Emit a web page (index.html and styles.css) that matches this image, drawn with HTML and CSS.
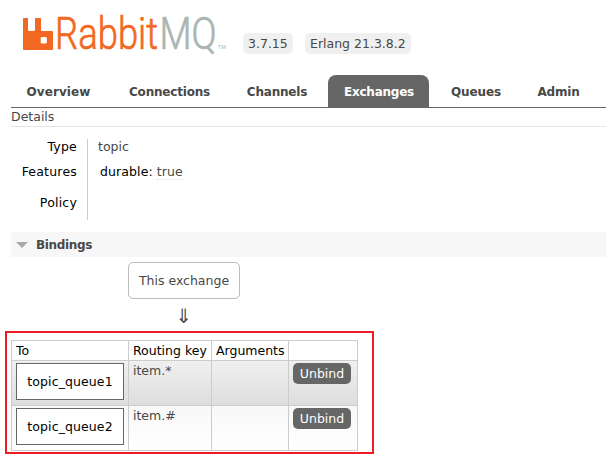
FILE: index.html
```html
<!DOCTYPE html>
<html lang="en">
<head>
<meta charset="utf-8">
<title>RabbitMQ Management</title>
<link rel="stylesheet" href="styles.css">
</head>
<body>
<header class="header">
  <svg class="logo" width="210" height="70" viewBox="20 0 210 70">
    <path class="mark" fill-rule="evenodd" d="M23.8 18H27.200Q28 18 28 18.800V29.500Q28 31 29.500 31H33.500Q35 31 35 29.500V18.800Q35 18 35.800 18H40.200Q41 18 41 18.800V30Q41 31 42 31H52Q53 31 53 32V49Q53 50 52 50H24Q23 50 23 49V18.800Q23 18 23.800 18ZM42 37Q40.700 37 40.700 38.300V42.200Q40.700 43.500 42 43.500H45.500Q46.800 43.500 46.800 42.200V38.300Q46.800 37 45.500 37Z"/>
    <text class="word orange" x="55" y="49" textLength="103" lengthAdjust="spacingAndGlyphs">Rabbit</text>
    <text class="word grey" x="159.500" y="49" textLength="57" lengthAdjust="spacingAndGlyphs">MQ</text>
    <text class="tm" x="218" y="49" textLength="8" lengthAdjust="spacingAndGlyphs">TM</text>
  </svg>
  <span class="version v1">3.7.15</span>
  <span class="version v2">Erlang 21.3.8.2</span>
</header>
<nav class="tabs">
  <a class="t1"><span>Overview</span></a>
  <a class="t2"><span>Connections</span></a>
  <a class="t3"><span>Channels</span></a>
  <a class="t4 selected"><span>Exchanges</span></a>
  <a class="t5"><span>Queues</span></a>
  <a class="t6"><span>Admin</span></a>
</nav>
<main>
  <h3 class="details">Details</h3>
  <dl class="facts">
    <dt>Type</dt><dd>topic</dd>
    <dt>Features</dt><dd class="feature">durable: <abbr>true</abbr></dd>
    <dt class="policy">Policy</dt><dd></dd>
  </dl>
  <h2 class="section"><svg width="12" height="6" viewBox="0 0 12 6"><path d="M0 0H12L6 6Z"/></svg>Bindings</h2>
  <div class="flow">
    <span class="exchange">This exchange</span>
    <span class="arrow">⇓</span>
  </div>
  <div class="highlight">
    <table>
      <colgroup><col class="c1"><col class="c2"><col class="c3"><col class="c4"></colgroup>
      <tr class="head"><th>To</th><th>Routing key</th><th>Arguments</th><th></th></tr>
      <tr class="odd"><td><span class="queue">topic_queue1</span></td><td>item.*</td><td></td><td><button>Unbind</button></td></tr>
      <tr class="even"><td><span class="queue">topic_queue2</span></td><td>item.#</td><td></td><td><button>Unbind</button></td></tr>
    </table>
  </div>
</main>
</body>
</html>
```
FILE: styles.css
```css
* { box-sizing: border-box; }
body {
  margin: 0;
  padding-left: 11px;
  height: 464px;
  overflow: hidden;
  background: #fff;
  color: #484848;
  font: 12.5px/16px "DejaVu Sans", Verdana, sans-serif;
}
.header { display: flex; height: 75px; padding-left: 9px; }
.logo { flex: none; }
.mark, .orange { fill: #f26822; }
.grey { fill: #a9b6b0; }
.word { font-family: Roboto, sans-serif; font-weight: 300; font-size: 45px; stroke-width: .7px; }
.orange { stroke: #f26822; }
.grey { stroke: #a9b6b0; }
.tm { fill: #a9b6b0; font: 6px "Liberation Sans", sans-serif; }
.version { height: 21px; margin-top: 33px; padding-left: 5px; border-radius: 5px; background: #f0f0f0; line-height: 22px; white-space: nowrap; }
.v1 { width: 50px; margin-left: 13px; }
.v2 { width: 106px; margin-left: 12px; }
.tabs { display: flex; height: 33px; border-bottom: 1px solid #666; font-weight: bold; font-size: 12px; }
.tabs a { height: 32px; line-height: 34px; text-align: center; border-radius: 8px 8px 0 0; white-space: nowrap; }
.t1 { width: 95px; letter-spacing: .1px; }
.t2 { width: 126px; padding-left: 1px; letter-spacing: -.2px; }
.t3 { width: 88px; padding-left: 2px; letter-spacing: -.2px; }
.t4 { width: 101px; margin-left: 8px; padding-left: 1px; letter-spacing: -.25px; }
.t5 { width: 94px; letter-spacing: -.1px; }
.t6 { width: 71px; letter-spacing: -.2px; }
.tabs .selected { background: #666; color: #fff; }
.details { margin: 0; height: 19px; border-bottom: 1px solid #e4e4e4; font-size: 12.5px; font-weight: normal; line-height: 18px; }
.facts { display: grid; grid-template-columns: 77px 1fr; grid-template-rows: 20px 29px 32px; margin: 12px 0; }
.facts dt { padding-right: 10px; border-right: 1px solid #ccc; color: #000; text-align: right; letter-spacing: .2px; }
.facts dd { margin: 0; padding-left: 10px; }
.facts dt, .facts dd { line-height: 16px; }
.facts dt:nth-of-type(2), .facts .feature { padding-top: 5px; }
.facts .policy { padding-top: 7px; }
.facts .feature { padding-left: 12px; color: #000; letter-spacing: .1px; }
.feature abbr { color: #484848; border-bottom: 1px dotted #ddd; }
.section { display: flex; align-items: center; gap: 8px; margin: 0; padding-left: 5px; height: 25px; background: #f7f7f7; font-size: 12px; letter-spacing: -.35px; }
.section path { fill: #aaa; }
.flow { display: flex; flex-direction: column; align-items: center; width: 112px; height: 74px; margin-left: 117px; padding-top: 5px; }
.exchange { width: 112px; height: 37px; border: 1px solid #bbb; border-radius: 5px; line-height: 36px; text-align: center; }
.arrow { height: 30px; font-size: 20px; line-height: 34px; }
.highlight { width: 369px; height: 123px; margin-left: -6px; padding: 7px 0 0 4px; border: 2px solid #ed1c24; }
table { width: 347px; border-collapse: collapse; table-layout: fixed; }
.c1 { width: 117px; }
.c2 { width: 83px; }
.c3 { width: 77px; }
.c4 { width: 69px; }
th, td { border: 1px solid #ccc; padding: 2px 4px; text-align: left; vertical-align: top; }
th { height: 20px; padding-top: 2px; padding-bottom: 1px; font-weight: normal; color: #000; white-space: nowrap; }
td { height: 45px; }
.odd { background: linear-gradient(#f0f0f0, #ddd); }
.even { background: linear-gradient(#f8f8f8, #fff); }
.queue { display: block; width: 108px; height: 37px; border: 1px solid #666; background: #fff; color: #000; line-height: 36px; text-align: center; letter-spacing: .1px; }
button { display: block; width: 58px; height: 21px; padding: 0; border: 0; border-radius: 5px; background: #666; color: #fff; font: inherit; line-height: 20px; }
```
